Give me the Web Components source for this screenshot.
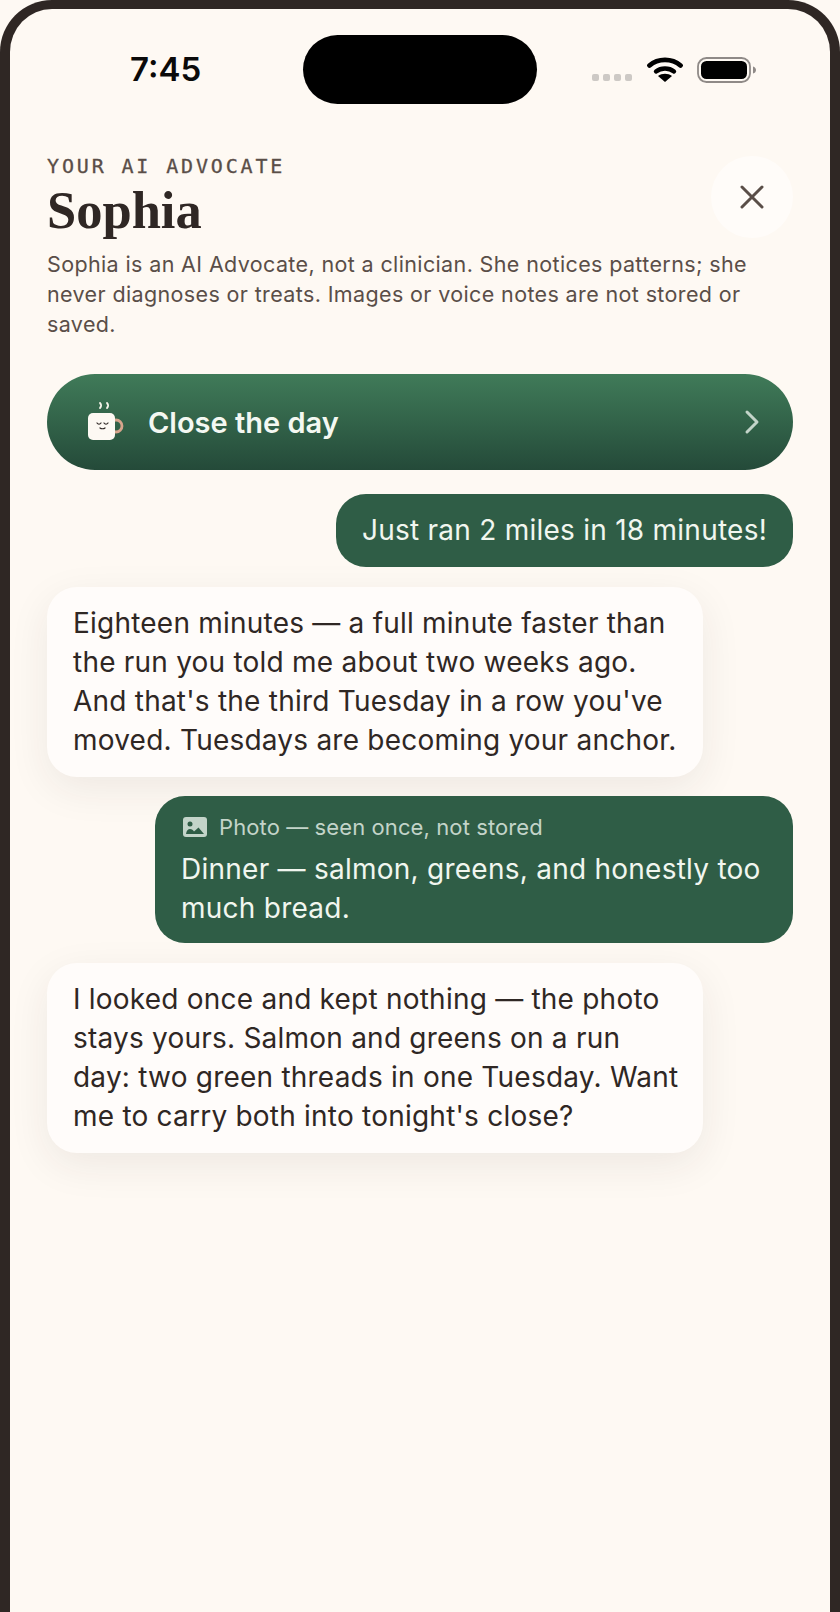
<!DOCTYPE html>
<html>
<head>
<meta charset="utf-8">
<style>
  html, body { margin: 0; background: #fef9f3; }
  body { font-family: Inter, "Liberation Sans", sans-serif; }
</style>
</head>
<body>
<phone-frame>
  <status-bar time="7:45"></status-bar>
  <advocate-header eyebrow="YOUR AI ADVOCATE" name="Sophia">Sophia is an AI Advocate, not a clinician. She notices patterns; she never diagnoses or treats. Images or voice notes are not stored or saved.</advocate-header>
  <close-day-button>Close the day</close-day-button>
  <chat-thread>
    <chat-bubble from="user">Just ran 2 miles in 18 minutes!</chat-bubble>
    <chat-bubble from="ai">Eighteen minutes — a full minute faster than the run you told me about two weeks ago. And that's the third Tuesday in a row you've moved. Tuesdays are becoming your anchor.</chat-bubble>
    <chat-bubble from="user" note="Photo — seen once, not stored">Dinner — salmon, greens, and honestly too much bread.</chat-bubble>
    <chat-bubble from="ai">I looked once and kept nothing — the photo stays yours. Salmon and greens on a run day: two green threads in one Tuesday. Want me to carry both into tonight's close?</chat-bubble>
  </chat-thread>
</phone-frame>

<script>
class PhoneFrame extends HTMLElement {
  constructor () {
    super()
    this.attachShadow({ mode: 'open' })
  }

  connectedCallback () {
    this.shadowRoot.innerHTML = `
      <style>
        :host {
          display: block;
          box-sizing: border-box;
          width: 840px;
          height: 1612px;
          padding: 0 37px;
          border: solid #2f2724;
          border-width: 9px 10px 0;
          border-radius: 52px 52px 0 0;
          background: #fef9f3;
          overflow: hidden;
        }
      </style>
      <slot></slot>
    `
  }
}

class StatusBar extends HTMLElement {
  constructor () {
    super()
    this.attachShadow({ mode: 'open' })
  }

  connectedCallback () {
    this.shadowRoot.innerHTML = `
      <style>
        :host {
          display: flex;
          align-items: center;
          height: 69px;
          margin: 26px -37px 0;
        }
        .time {
          width: 293px;
          box-sizing: border-box;
          padding-left: 120px;
          font: 600 33px/1 Inter, sans-serif;
          color: #0b0a0a;
        }
        .island {
          width: 234px;
          height: 69px;
          border-radius: 35px;
          background: #000;
        }
        .right {
          display: flex;
          align-items: center;
          margin-left: 55px;
        }
        .dots { display: flex; gap: 4px; margin: 16px 15px 0 0; }
        .dots i { width: 7px; height: 7px; border-radius: 2px; background: #cdc9c5; }
        svg { display: block; }
      </style>
      <div class="time">${this.getAttribute('time')}</div>
      <div class="island"></div>
      <div class="right">
        <div class="dots"><i></i><i></i><i></i><i></i></div>
        <svg width="36" height="26" viewBox="0 0 36 26" style="margin: -2px 14px 0 0">
          <path d="M2.500 9.500C11 2 25 2 33.500 9.500" fill="none" stroke="#000" stroke-width="4.800" stroke-linecap="round"/>
          <path d="M9 15.500C14 11.500 22 11.500 27 15.500" fill="none" stroke="#000" stroke-width="4.400" stroke-linecap="round"/>
          <path d="M18 26L11 20C15 17 21 17 25 20Z" fill="#000"/>
        </svg>
        <svg width="60" height="26" viewBox="0 0 60 26">
          <rect x="1" y="1" width="52" height="24" rx="8.500" fill="none" stroke="#8f8a87" stroke-width="1.800"/>
          <rect x="4" y="4" width="46" height="18" rx="5.500" fill="#000"/>
          <path d="M56 9.500c2 .5 3 2 3 3.500s-1 3-3 3.500z" fill="#8f8a87"/>
        </svg>
      </div>
    `
  }
}

class AdvocateHeader extends HTMLElement {
  constructor () {
    super()
    this.attachShadow({ mode: 'open' })
  }

  connectedCallback () {
    this.shadowRoot.innerHTML = `
      <style>
        :host {
          display: grid;
          grid-template-columns: 1fr 82px;
          margin-top: 52px;
        }
        .eyebrow {
          margin-top: -2px;
          font: 400 20px/24px "DejaVu Sans Mono", monospace;
          letter-spacing: 2.850px;
          -webkit-text-stroke: .3px #5a4e48;
          color: #5a4e48;
          white-space: nowrap;
        }
        h1 {
          margin: 4px 0 0;
          font: 700 52.500px/56px "Liberation Serif", serif;
          color: #2f2724;
        }
        .close {
          display: flex;
          align-items: center;
          justify-content: center;
          width: 82px;
          height: 82px;
          border-radius: 50%;
          background: #fffcf9;
        }
        p {
          grid-column: 1 / -1;
          max-width: 715px;
          margin: 12px 0 0;
          font: 400 21.500px/29.800px Inter, sans-serif;
          letter-spacing: .37px;
          color: #5a4e48;
        }
      </style>
      <div>
        <div class="eyebrow">${this.getAttribute('eyebrow')}</div>
        <h1>${this.getAttribute('name')}</h1>
      </div>
      <div class="close">
        <svg width="24" height="24" viewBox="0 0 24 24"><path d="M2 2L22 22M22 2L2 22" stroke="#5a4e48" stroke-width="3" stroke-linecap="round"/></svg>
      </div>
      <p><slot></slot></p>
    `
  }
}

class CloseDayButton extends HTMLElement {
  constructor () {
    super()
    this.attachShadow({ mode: 'open' })
  }

  connectedCallback () {
    this.shadowRoot.innerHTML = `
      <style>
        :host {
          display: flex;
          align-items: center;
          box-sizing: border-box;
          height: 96px;
          margin-top: 35px;
          padding: 0 32px 0 39px;
          border-radius: 48px;
          background: linear-gradient(180deg, #407b59, #244a39);
          color: #f4f8f2;
          font: 600 29px/1 Inter, sans-serif;
        }
        .label { flex: 1; margin-left: 21px; }
        svg { display: block; }
      </style>
      <svg width="41" height="42" viewBox="0 0 41 42">
        <path d="M14 2c1.500 1.500 1.500 3.500 0 5M21 2c1.500 1.500 1.500 3.500 0 5" fill="none" stroke="#f6f3ea" stroke-width="1.800" stroke-linecap="round"/>
        <circle cx="30" cy="25" r="6" fill="none" stroke="#d6a48c" stroke-width="2.800"/>
        <rect x="2" y="12" width="27" height="27" rx="5" fill="#fdf9f3"/>
        <path d="M11 22c1 1.500 3 1.500 4 0M18 22c1 1.500 3 1.500 4 0M14 27c1.200 1 3.800 1 5 0" fill="none" stroke="#2f2724" stroke-width="1.200" stroke-linecap="round"/>
      </svg>
      <span class="label"><slot></slot></span>
      <svg width="18" height="26" viewBox="0 0 18 26"><path d="M4 3L14 13L4 23" fill="none" stroke="#c3d4c9" stroke-width="3" stroke-linecap="round" stroke-linejoin="round"/></svg>
    `
  }
}

class ChatThread extends HTMLElement {
  constructor () {
    super()
    this.attachShadow({ mode: 'open' })
  }

  connectedCallback () {
    this.shadowRoot.innerHTML = `
      <style>
        :host {
          display: flex;
          flex-direction: column;
          gap: 19.500px;
          margin-top: 24px;
        }
      </style>
      <slot></slot>
    `
  }
}

class ChatBubble extends HTMLElement {
  constructor () {
    super()
    this.attachShadow({ mode: 'open' })
  }

  connectedCallback () {
    const note = this.getAttribute('note')
    this.shadowRoot.innerHTML = `
      <style>
        :host {
          display: block;
          box-sizing: border-box;
          padding: 17px 26px;
          border-radius: 30px;
          font: 400 28px/39px Inter, sans-serif;
          letter-spacing: .22px;
        }
        :host([from="user"]) {
          align-self: flex-end;
          max-width: 638px;
          letter-spacing: .25px;
          background: #2f5d46;
          color: #f1f6ef;
        }
        :host([from="ai"]) {
          align-self: flex-start;
          width: 656px;
          padding-right: 22px;
          background: #fffcfa;
          color: #2f2724;
          box-shadow: 0 12px 40px rgba(47, 39, 36, .08);
        }
        :host([note]) { padding-bottom: 15px; }
        .note {
          display: flex;
          align-items: center;
          gap: 12px;
          font-size: 22px;
          line-height: 28px;
          letter-spacing: .1px;
          color: #c3d4c9;
          margin-bottom: 9px;
        }
        .note svg { margin-left: 2px; }
      </style>
      ${note ? `<div class="note">
        <svg width="24" height="20" viewBox="0 0 24 20">
          <rect width="24" height="20" rx="3" fill="#c3d4c9"/>
          <circle cx="7" cy="7" r="2.500" fill="#2f5d46"/>
          <path d="M3 17c.5-3.500 2-5 4-5s3 1 4 2.500l4.500-4 5.500 6.500z" fill="#2f5d46"/>
        </svg>
        <span>${note}</span>
      </div>` : ''}
      <slot></slot>
    `
  }
}

customElements.define('phone-frame', PhoneFrame)
customElements.define('status-bar', StatusBar)
customElements.define('advocate-header', AdvocateHeader)
customElements.define('close-day-button', CloseDayButton)
customElements.define('chat-thread', ChatThread)
customElements.define('chat-bubble', ChatBubble)
</script>
</body>
</html>
